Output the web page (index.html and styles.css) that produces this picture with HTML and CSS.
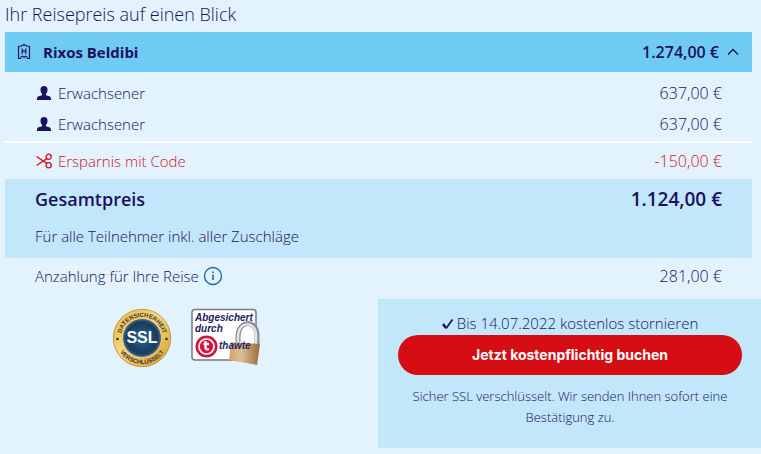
FILE: index.html
```html
<!DOCTYPE html>
<html lang="de">
<head>
<meta charset="utf-8">
<meta name="viewport" content="width=device-width, initial-scale=1">
<title>Ihr Reisepreis</title>
<link rel="stylesheet" href="styles.css">
</head>
<body>
<main>
  <section class="price">
    <h1 class="title">Ihr Reisepreis auf einen Blick</h1>
    <button class="hotel" type="button" aria-expanded="true">
      <svg width="14" height="18" viewBox="0 0 14 18" fill="none" stroke="currentColor" stroke-width="1.2"><path d="M1.500 3.500Q4.500 3.500 7 1.500Q9.500 3.500 12.500 3.500V15.500H10.500Q10 13 8.500 13L7 14.500L5.500 13Q4 13 3.500 15.500H1.500Z"/><path d="M5.200 5.500V11M8.800 5.500V11M5.200 8.200H8.800"/></svg>
      <span class="hotel-name">Rixos Beldibi</span>
      <span class="hotel-price">1.274,00 €</span>
      <svg width="12" height="8" viewBox="0 0 12 8" fill="none" stroke="currentColor" stroke-width="1.3"><path d="M1 6.500L6 1.500L11 6.500"/></svg>
    </button>
    <table class="costs">
      <tbody class="travellers">
        <tr>
          <th scope="row"><svg class="icon" width="16" height="16" viewBox="0 0 16 16" fill="currentColor"><path d="M8 1C10.300 1 11.700 2.500 11.500 5C11.400 7 10.700 8.200 9.900 9V10.300C12 11 15 11.200 15 13.500V15H1V13.500C1 11.200 4 11 6.100 10.300V9C5.300 8.200 4.600 7 4.500 5C4.300 2.500 5.700 1 8 1Z"/></svg>Erwachsener</th>
          <td>637,00 €</td>
        </tr>
        <tr>
          <th scope="row"><svg class="icon" width="16" height="16" viewBox="0 0 16 16" fill="currentColor"><path d="M8 1C10.300 1 11.700 2.500 11.500 5C11.400 7 10.700 8.200 9.900 9V10.300C12 11 15 11.200 15 13.500V15H1V13.500C1 11.200 4 11 6.100 10.300V9C5.300 8.200 4.600 7 4.500 5C4.300 2.500 5.700 1 8 1Z"/></svg>Erwachsener</th>
          <td>637,00 €</td>
        </tr>
      </tbody>
      <tbody class="saving">
        <tr>
          <th scope="row"><svg class="icon" width="16" height="16" viewBox="0 0 16 16" fill="none" stroke="currentColor" stroke-width="1.300"><path d="M0.500 3.500L10.800 10.400M0.500 12.500L10.800 5.600"/><circle cx="12.700" cy="3.700" r="2.600"/><circle cx="12.700" cy="12.300" r="2.600"/></svg>Ersparnis mit Code</th>
          <td>-150,00 €</td>
        </tr>
      </tbody>
      <tbody class="total">
        <tr class="sum">
          <th scope="row">Gesamtpreis</th>
          <td>1.124,00 €</td>
        </tr>
        <tr class="note">
          <td colspan="2">Für alle Teilnehmer inkl. aller Zuschläge</td>
        </tr>
      </tbody>
      <tbody class="deposit">
        <tr>
          <th scope="row"><span class="deposit-label">Anzahlung für Ihre Reise
            <button class="info" type="button" aria-label="Info"><svg width="20" height="20" viewBox="0 0 20 20" fill="none" stroke="currentColor" stroke-width="1.300"><circle cx="10" cy="10" r="8.500"/><path d="M10 8.500V14M10 5.500V7" stroke-width="1.600"/></svg></button></span></th>
          <td>281,00 €</td>
        </tr>
      </tbody>
    </table>
  </section>
  <section class="checkout">
    <div class="seals">
      <svg width="60" height="60" viewBox="0 0 60 60" role="img" aria-label="SSL Datensicherheit">
        <defs>
          <linearGradient id="gold" x1="0" y1="0" x2="1" y2="1"><stop offset="0" stop-color="#e9b53c"/><stop offset=".45" stop-color="#f8d87c"/><stop offset="1" stop-color="#d39a28"/></linearGradient>
          <radialGradient id="navy"><stop offset="0" stop-color="#2c648f"/><stop offset=".8" stop-color="#163b60"/><stop offset="1" stop-color="#547083"/></radialGradient>
          <path id="arc-top" d="M9 33A21.200 21.200 0 1 1 51 33"/>
          <path id="arc-bottom" d="M4 33A26.200 26.200 0 0 0 56 33"/>
        </defs>
        <circle cx="30" cy="30" r="28.700" fill="url(#gold)" stroke="#c09a48"/>
        <circle cx="30" cy="30" r="19.500" fill="url(#navy)" stroke="#ecd18a"/>
        <circle cx="5.500" cy="31" r="1.300" fill="#303238"/><circle cx="54.500" cy="31" r="1.300" fill="#303238"/>
        <text class="seal-ring"><textPath href="#arc-top" startOffset="50%" text-anchor="middle">DATENSICHERHEIT</textPath></text>
        <text class="seal-ring"><textPath href="#arc-bottom" startOffset="50%" text-anchor="middle">VERSCHLÜSSELT</textPath></text>
        <text class="seal-ssl" x="30" y="35" text-anchor="middle">SSL</text>
      </svg>
      <svg width="70" height="60" viewBox="0 0 70 60" role="img" aria-label="Abgesichert durch thawte">
        <defs><linearGradient id="brass"><stop offset="0" stop-color="#cda475"/><stop offset=".4" stop-color="#e0bd8e"/><stop offset="1" stop-color="#946a3e"/></linearGradient></defs>
        <rect x="1" y="1.500" width="64" height="50.500" rx="3" fill="#fff" stroke="#777983" stroke-width="1.500"/>
        <path d="M47 35V29C47 11 66 12 66 27V36" fill="none" stroke="#8c8f93" stroke-width="5"/>
        <path d="M47 35V29C47 12 65 13 65 27V36" fill="none" stroke="#e2e3e4" stroke-width="2.500"/>
        <path d="M40 34L69 36L66 57L38 52Z" fill="url(#brass)"/>
        <text class="seal-label" x="4" y="13">Abgesichert</text>
        <text class="seal-label" x="4" y="24">durch</text>
        <circle cx="15.500" cy="38.500" r="11" fill="#d4133c"/><circle cx="15.500" cy="38.500" r="7.500" fill="none" stroke="#fff" stroke-width="1.700"/>
        <path d="M14.500 33V39.500Q14.500 42 18 41M12.500 36H18" fill="none" stroke="#fff" stroke-width="2.300"/>
        <text class="seal-label" x="28" y="41">thawte</text>
      </svg>
    </div>
    <div class="booking">
      <p class="cancel"><svg width="12" height="12" viewBox="0 0 12 12" fill="none" stroke="currentColor"><path d="M1 6L4 10" stroke-width="2.500"/><path d="M4 10.500L10.500 1.500" stroke-width="1.700"/></svg>Bis 14.07.2022 kostenlos stornieren</p>
      <button class="book" type="button">Jetzt kostenpflichtig buchen</button>
      <p class="secure">Sicher SSL verschlüsselt. Wir senden Ihnen sofort eine Bestätigung zu.</p>
    </div>
  </section>
</main>
</body>
</html>
```
FILE: styles.css
```css
* { box-sizing: border-box; }
body {
  margin: 0;
  background: #e2f3fe;
  color: #1b115c;
  font: 300 15px/24px "Open Sans", "Noto Sans", sans-serif;
}
button { font: inherit; color: inherit; border: 0; cursor: pointer; }
svg { flex: none; }
.price { padding: 0 9px 0 5px; }
.title { margin: 0; padding-bottom: 4px; font-size: 18px; font-weight: 300; line-height: 28px; }
.hotel {
  display: flex;
  align-items: center;
  gap: 8px;
  width: 100%;
  height: 40px;
  padding: 0 13px 0 12px;
  background: #70cbf4;
  font-weight: 700;
  text-align: left;
}
.hotel-name { flex: 1; padding-left: 4px; }
.hotel-price { font-size: 16px; font-weight: 600; }
.costs { width: 100%; border-collapse: collapse; }
.costs th, .costs td { padding: 0 30px; font-weight: 300; text-align: left; }
.costs td:last-child:not([colspan]) { font-size: 16px; text-align: right; }
.icon { margin: 0 6px 0 1px; vertical-align: -2px; }
.travellers tr { height: 31px; }
.travellers::before, .travellers::after { content: ""; display: table-row; height: 5px; }
.travellers::after { height: 3px; }
.saving { border-top: 2px solid #fff; color: #d8101b; }
.saving tr { height: 37px; }
.total { background: #c2e7fa; }
.costs .sum > th { font-size: 18px; font-weight: 600; }
.costs .sum > td:last-child:not([colspan]) { font-size: 19px; font-weight: 600; }
.sum { height: 40px; }
.note { height: 39px; }
.costs .note td { padding-bottom: 5px; }
.deposit tr { height: 36px; }
.deposit-label { display: flex; align-items: center; gap: 4px; }
.info { padding: 0; background: none; color: #1769a5; height: 20px; line-height: 0; }
.checkout { display: flex; padding-top: 5px; }
.seals { flex: 1; display: flex; gap: 19px; padding: 9px 0 0 112px; }
.booking { width: 383px; padding: 12px 19px 20px 20px; background: #c2e7fa; text-align: center; }
.booking p { margin: 0; }
.cancel svg { margin-right: 3px; vertical-align: -1px; }
.book { display: block; width: 100%; height: 40px; border-radius: 20px; background: #d60d15; color: #fff; font: 700 14px/20px Inter, sans-serif; }
.booking .secure { margin-top: 11px; font-size: 13px; line-height: 21px; }
.seal-ring { font: 700 6px "Liberation Sans", sans-serif; fill: #34353a; }
.seal-ssl { font: 700 16px "Liberation Sans", sans-serif; fill: #fff; }
.seal-label { font: italic 700 10px "Liberation Sans", sans-serif; fill: #20215e; }
```
